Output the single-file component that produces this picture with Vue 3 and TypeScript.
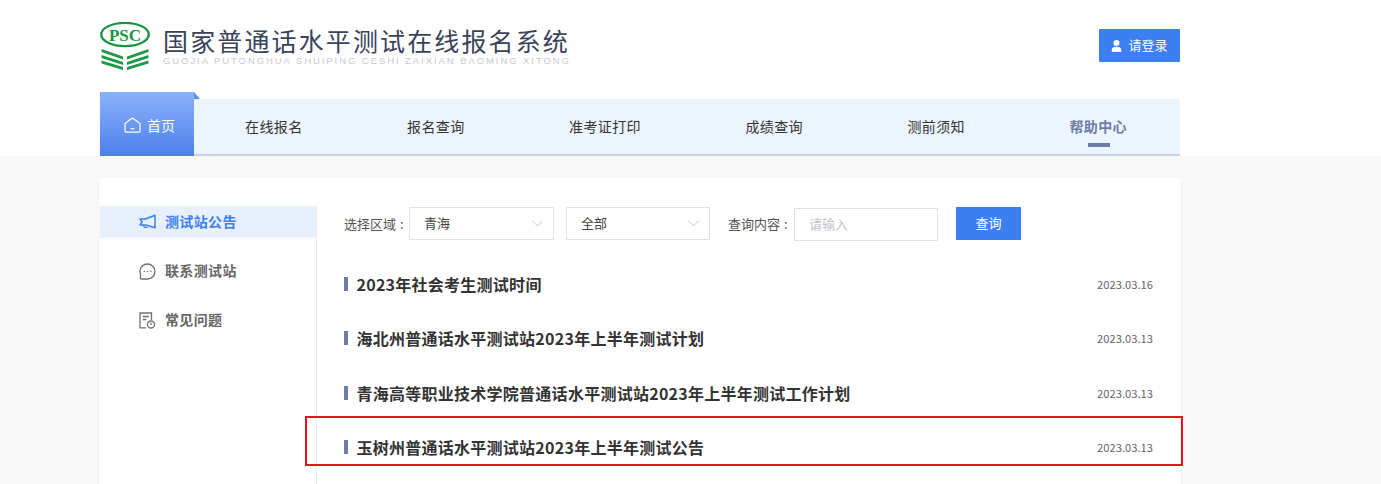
<script setup lang="ts">
interface Notice {
  title: string
  date: string
}

const navItems = ['在线报名', '报名查询', '准考证打印', '成绩查询', '测前须知']

const notices: Notice[] = [
  { title: '2023年社会考生测试时间', date: '2023.03.16' },
  { title: '海北州普通话水平测试站2023年上半年测试计划', date: '2023.03.13' },
  { title: '青海高等职业技术学院普通话水平测试站2023年上半年测试工作计划', date: '2023.03.13' },
  { title: '玉树州普通话水平测试站2023年上半年测试公告', date: '2023.03.13' },
]
</script>

<template>
  <div class="page">
    <div class="top">
      <div class="header">
        <div class="logo">
          <svg class="logo-mark" width="50" height="48" viewBox="0 0 50 48">
            <ellipse cx="25" cy="12.500" rx="23.800" ry="11.600" fill="none" stroke="#1b9440" stroke-width="2.300" />
            <text x="25" y="18.500" text-anchor="middle" class="psc">PSC</text>
            <g fill="#1f9a45">
              <path d="M1.500 27 23 34.500v3L1.500 30z" />
              <path d="M1.500 33 23 40v3L1.500 36z" />
              <path d="M1.500 38.500 23 45v3L1.500 41.500z" />
              <path d="M48.500 27 27 34.500v3L48.500 30z" />
              <path d="M48.500 33 27 40v3L48.500 36z" />
              <path d="M48.500 38.500 27 45v3L48.500 41.500z" />
            </g>
          </svg>
          <div class="logo-text">
            <div class="logo-title">国家普通话水平测试在线报名系统</div>
            <div class="logo-sub">GUOJIA PUTONGHUA SHUIPING CESHI ZAIXIAN BAOMING XITONG</div>
          </div>
        </div>
        <a class="login">
          <svg width="11" height="12" viewBox="0 0 11 12">
            <circle cx="5.500" cy="3" r="3" fill="#fff" />
            <path d="M.8 12V9.600C.8 7.900 2.400 6.800 5.500 6.800s4.700 1.100 4.700 2.800V12z" fill="#fff" />
          </svg>
          <span class="login-text">请登录</span>
        </a>
      </div>
      <nav class="nav">
        <a class="nav-home">
          <svg width="17" height="16" viewBox="0 0 17 16" fill="none" stroke="#fff" stroke-width="1.200">
            <path d="M1 6.500 8.500 1 16 6.500V14a1.200 1.200 0 0 1-1.200 1.200H2.200A1.200 1.200 0 0 1 1 14z" stroke-linejoin="round" />
            <path d="M6.500 11.800h4" />
          </svg>
          <span>首页</span>
        </a>
        <div class="nav-list">
          <a v-for="item in navItems" :key="item" class="nav-item">{{ item }}</a>
          <a class="nav-item nav-item-active">帮助中心</a>
        </div>
      </nav>
    </div>

    <div class="card">
      <aside class="side">
        <a class="side-item side-item-active">
          <svg width="17" height="16" viewBox="0 0 17 16" fill="none" stroke="#3b7ff0" stroke-width="1.500" stroke-linejoin="round">
            <path d="M16 1.200v12.600L6.500 11H1l2.200-3L1 5h5.500z" />
            <path d="M4.500 11l.8 2.300h3.200" stroke-width="1.200" />
          </svg>
          <span class="side-text">测试站公告</span>
        </a>
        <a class="side-item">
          <svg width="17" height="17" viewBox="0 0 17 17" fill="none" stroke="#707070" stroke-width="1.300">
            <path d="M8.500 1a7.500 7.500 0 1 1 0 15H2.500c-.8 0-1.300-.5-1.200-1.300l.4-3A7.500 7.500 0 0 1 8.500 1z" stroke-linejoin="round" />
            <circle cx="5.300" cy="8.500" r=".8" fill="#707070" stroke="none" />
            <circle cx="8.500" cy="8.500" r=".8" fill="#707070" stroke="none" />
            <circle cx="11.700" cy="8.500" r=".8" fill="#707070" stroke="none" />
          </svg>
          <span class="side-text">联系测试站</span>
        </a>
        <a class="side-item">
          <svg width="17" height="17" viewBox="0 0 17 17" fill="none" stroke="#707070" stroke-width="1.300">
            <path d="M7 15.800H1V1h11.500v7" />
            <path d="M3.800 4.500h6M3.800 7.500h3.500" />
            <circle cx="12" cy="12.500" r="3.500" />
            <path d="M12 10.800v2.200" />
          </svg>
          <span class="side-text">常见问题</span>
        </a>
      </aside>

      <main class="main">
        <div class="filters">
          <span class="filter-label">选择区域<span class="colon">:</span></span>
          <div class="select">
            <span>青海</span>
            <svg class="chevron" width="11" height="7" viewBox="0 0 11 7" fill="none" stroke="#c4c8d0">
              <path d="M.5.800 5.500 6l5-5.200" />
            </svg>
          </div>
          <div class="select select-second">
            <span>全部</span>
            <svg class="chevron" width="11" height="7" viewBox="0 0 11 7" fill="none" stroke="#c4c8d0">
              <path d="M.5.800 5.500 6l5-5.200" />
            </svg>
          </div>
          <span class="filter-label filter-label-second">查询内容<span class="colon">:</span></span>
          <input class="search-input" type="text" placeholder="请输入" />
          <button class="search-btn" type="button">查询</button>
        </div>

        <ul class="notice-list">
          <li v-for="notice in notices" :key="notice.title" class="notice">
            <span class="notice-title">{{ notice.title }}</span>
            <span class="notice-date">{{ notice.date }}</span>
          </li>
        </ul>
      </main>
    </div>

    <div class="highlight"></div>
  </div>
</template>

<style>
html,
body {
  margin: 0;
  overflow: hidden;
  background: #f8f8f8;
}
</style>

<style scoped>
.page {
  position: relative;
  height: 484px;
  overflow: hidden;
  font-family: "Noto Sans CJK SC", "Open Sans", sans-serif;
  background: #f8f8f8;
}

.top {
  height: 156px;
  background: #fff;
}

.header {
  width: 1080px;
  height: 99px;
  margin-left: 100px;
  display: flex;
  justify-content: space-between;
  align-items: flex-start;
  box-sizing: border-box;
  padding-top: 22px;
}

.logo {
  display: flex;
  gap: 13px;
}

.psc {
  font-family: "Liberation Serif", serif;
  font-weight: 700;
  font-size: 17px;
  fill: #1b9440;
}

.logo-title {
  font-size: 25px;
  line-height: 28px;
  margin-top: 4px;
  letter-spacing: 2.130px;
  color: #39435a;
  white-space: nowrap;
}

.logo-sub {
  font-family: "Liberation Sans", sans-serif;
  font-size: 9.500px;
  line-height: 11px;
  margin-top: 1px;
  letter-spacing: 1.930px;
  color: #c6cacf;
  white-space: nowrap;
}

.login {
  display: flex;
  align-items: center;
  justify-content: center;
  gap: 6px;
  width: 81px;
  height: 33px;
  margin-top: 7px;
  background: #3b7ff0;
  color: #fff;
  font-size: 13px;
  border-radius: 1px;
}

.login-text {
  padding-bottom: 3px;
}

.nav {
  width: 1080px;
  height: 57px;
  margin-left: 100px;
  display: flex;
  box-sizing: border-box;
  background: #ecf4fd;
  border-bottom: 2px solid #c6d3e6;
}

.nav-home {
  position: relative;
  align-self: flex-end;
  width: 94px;
  height: 64px;
  margin-bottom: -2px;
  display: flex;
  align-items: center;
  gap: 6px;
  padding: 2px 0 0 24px;
  box-sizing: border-box;
  background: linear-gradient(#8cb2fc, #4c80ea);
  color: #fff;
  font-size: 14px;
}

.nav-home::after {
  content: "";
  position: absolute;
  top: 0;
  left: 94px;
  border-style: solid;
  border-width: 7px 0 0 6px;
  border-color: transparent transparent transparent #5f8fe8;
}

.nav-list {
  display: flex;
  gap: 104.400px;
  padding-left: 51px;
}

.nav-item {
  position: relative;
  font-size: 14px;
  letter-spacing: 0.4px;
  line-height: 55px;
  color: #333;
  white-space: nowrap;
}

.nav-item-active {
  color: #6c7ea6;
  font-weight: 700;
}

.nav-item-active::after {
  content: "";
  position: absolute;
  left: 19px;
  bottom: 7px;
  width: 22px;
  height: 4px;
  background: #6c7ea6;
}

.card {
  width: 1080px;
  height: 400px;
  margin: 22px 0 0 100px;
  background: #fff;
  display: flex;
  padding-top: 28px;
  box-sizing: border-box;
}

.side {
  width: 217px;
  flex-shrink: 0;
  border-right: 1px solid #ebebeb;
  box-sizing: border-box;
}

.side-item {
  height: 32px;
  margin-bottom: 17px;
  padding-left: 39px;
  display: flex;
  align-items: center;
  gap: 9px;
  font-size: 14px;
  font-weight: 700;
  color: #666;
}

.side-text {
  padding-bottom: 2px;
  letter-spacing: 0.35px;
}

.side-item-active {
  background: #e8f0fd;
  color: #3b7ff0;
}

.main {
  flex: 1;
  padding: 1px 27px 0 27px;
  min-width: 0;
}

.filters {
  display: flex;
  align-items: center;
  height: 33px;
  font-size: 13px;
  color: #555;
}

.filter-label {
  width: 65px;
  white-space: nowrap;
}

.colon {
  margin-left: 4px;
}

.filter-label-second {
  margin-left: 18px;
}

.select {
  position: relative;
  width: 145px;
  height: 33px;
  box-sizing: border-box;
  padding: 0 0 2px 14px;
  display: flex;
  align-items: center;
  justify-content: space-between;
  border: 1px solid #dfe1e8;
  color: #444;
}

.select-second {
  margin-left: 12px;
  width: 144px;
}

.chevron {
  margin-right: 10px;
  margin-top: 2px;
}

.search-input {
  width: 144px;
  height: 33px;
  margin-top: 2px;
  margin-left: 1px;
  box-sizing: border-box;
  padding: 0 14px 2px;
  border: 1px solid #dfe1e8;
  outline: none;
  font: inherit;
  color: #444;
}

.search-input::placeholder {
  color: #c0c4cc;
}

.search-btn {
  width: 65px;
  height: 33px;
  margin-left: 18px;
  border: none;
  background: #3b7ff0;
  color: #fff;
  font: inherit;
  padding: 0 0 2px;
}

.notice-list {
  list-style: none;
  margin: 17px 0 0;
  padding: 0;
}

.notice {
  height: 54.330px;
  display: flex;
  align-items: center;
  justify-content: space-between;
}

.notice-title {
  position: relative;
  padding-left: 12.500px;
  font-size: 16px;
  font-weight: 700;
  letter-spacing: 0.26px;
  color: #333;
  white-space: nowrap;
}

.notice-title::before {
  content: "";
  position: absolute;
  left: 0;
  top: 50%;
  width: 4px;
  height: 14px;
  margin-top: -7px;
  background: #6c7ea6;
}

.notice-date {
  font-size: 11.200px;
  color: #666;
}

.highlight {
  position: absolute;
  left: 305px;
  top: 416px;
  width: 878px;
  height: 50px;
  box-sizing: border-box;
  border: 2px solid #e8141c;
  pointer-events: none;
}
</style>
